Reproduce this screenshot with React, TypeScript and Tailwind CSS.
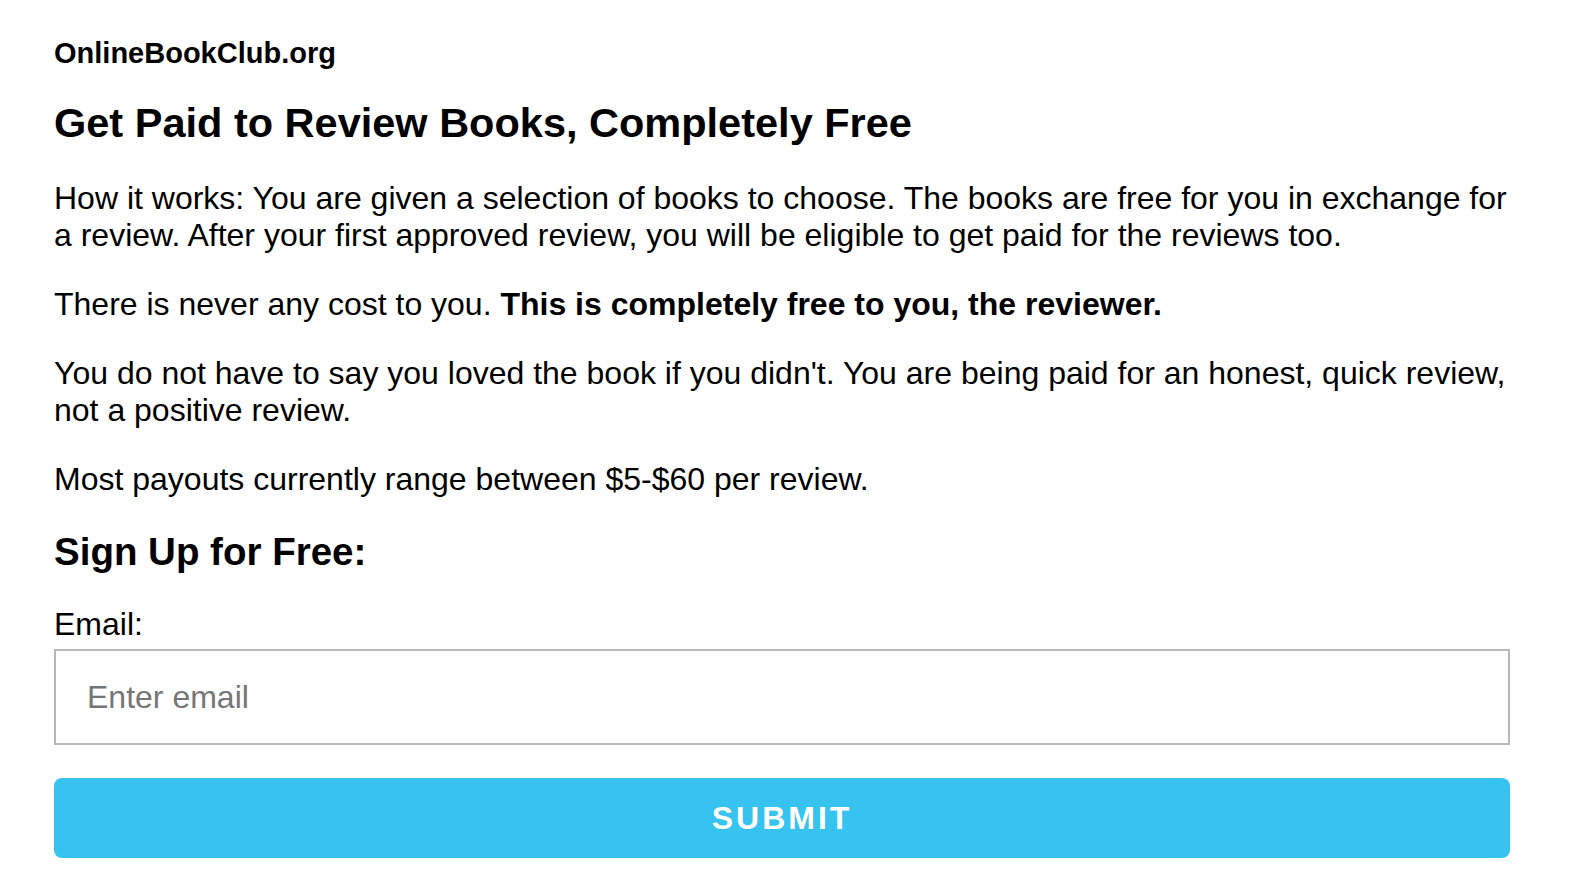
export default function App() {
  return (
    <div className="min-h-screen bg-white text-black" style={{ fontFamily: '"Liberation Sans", Arial, Helvetica, sans-serif' }}>
      <div className="w-[1510px] pl-[54px] pt-[37px]">
        <div className="text-[29px] font-bold leading-[33px]">OnlineBookClub.org</div>
        <h1 className="mt-[29px] text-[41.5px] font-bold leading-[48px]">Get Paid to Review Books, Completely Free</h1>
        <p className="mt-[33px] text-[32px] leading-[37px]">
          How it works: You are given a selection of books to choose. The books are free for you in exchange for a review. After your first approved review, you will be eligible to get paid for the reviews too.
        </p>
        <p className="mt-[32px] text-[32px] leading-[37px]">
          There is never any cost to you. <b>This is completely free to you, the reviewer.</b>
        </p>
        <p className="mt-[32px] text-[32px] leading-[37px]">
          You do not have to say you loved the book if you didn't. You are being paid for an honest, quick review, not a positive review.
        </p>
        <p className="mt-[32px] text-[32px] leading-[37px]">Most payouts currently range between $5-$60 per review.</p>
        <h2 className="mt-[32px] text-[38.5px] font-bold leading-[44px]">Sign Up for Free:</h2>
        <form className="mt-[32px] flex flex-col" onSubmit={(e) => e.preventDefault()}>
          <label className="text-[32px] leading-[37px]">Email:</label>
          <input
            type="email"
            placeholder="Enter email"
            className="mt-[6px] h-[96px] w-full border-2 border-[#b8b8b8] px-[31px] text-[32px] outline-none placeholder:text-[#767676]"
          />
          <button
            type="submit"
            className="mt-[33px] h-[80px] w-full rounded-[8px] bg-[#36c3ef] text-[32px] font-bold uppercase tracking-[3px] text-white"
          >
            Submit
          </button>
        </form>
      </div>
    </div>
  );
}
